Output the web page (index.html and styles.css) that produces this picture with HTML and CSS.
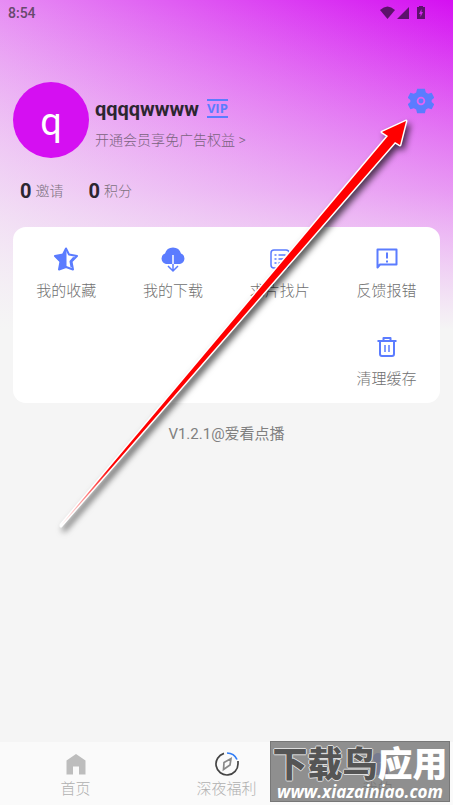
FILE: index.html
```html
<!DOCTYPE html>
<html lang="zh-CN">
<head>
<meta charset="utf-8">
<meta name="viewport" content="width=device-width, initial-scale=1">
<title>我的</title>
<link rel="stylesheet" href="styles.css">
</head>
<body>
<div class="app">
  <header class="status">
    <span>8:54</span>
    <svg class="status-icons" viewBox="0 0 46 16" aria-hidden="true">
      <path d="M0 5Q7.500-2 15 5L7.500 14Z"/>
      <path d="M29 2v12H17Z"/>
      <path fill-rule="evenodd" d="M39 1h4v1h2v12h-8V2h2ZM41.500 4 39 9h1.500v3L43 7h-1.500Z"/>
    </svg>
  </header>

  <main class="content">
    <section class="profile">
      <div class="avatar">q</div>
      <div class="identity">
        <div class="name-row">
          <h1 class="name">qqqqwwww</h1>
          <span class="vip">VIP</span>
        </div>
        <a class="promo" href="#vip">开通会员享免广告权益 &gt;</a>
      </div>
      <button class="settings" type="button" aria-label="设置">
        <svg viewBox="2 2 20 20" aria-hidden="true"><path fill-rule="evenodd" d="M9 2.500h6l.7 3 1.800 1 2.700-.9 2 4-2 1.700v1.400l2 1.700-2 4-2.700-.9-1.800 1-.7 3H9l-.7-3-1.800-1-2.700.9-2-4 2-1.700v-1.400l-2-1.700 2-4 2.700.9 1.800-1ZM12 8.700a3.300 3.300 0 1 0 0 6.600 3.300 3.300 0 0 0 0-6.600Z"/><circle cx="12" cy="12" r="1.900"/></svg>
      </button>
    </section>

    <section class="stats">
      <span class="stat"><b>0</b>邀请</span>
      <span class="stat"><b>0</b>积分</span>
    </section>

    <nav class="card">
      <a class="tile" href="#favorites">
        <svg viewBox="0 0 26 26" aria-hidden="true"><path class="line" d="M13 2.500 16 8.500 24 10 18.500 15.500 20 23.500 13 21 6 23.500 7.500 15.500 2 10 10 8.500Z"/><path d="M13.500 2 9 9 1.500 10 7 16 6 24 13.500 21Z"/><path class="line" d="M21 11.500 17.500 15.500 18.500 21"/></svg>
        <span>我的收藏</span>
      </a>
      <a class="tile" href="#downloads">
        <svg viewBox="0 0 26 26" aria-hidden="true"><path d="M6 18A5.500 5.500 0 0 1 5 7.500a8.300 8.300 0 0 1 16 0A5.500 5.500 0 0 1 20 18Z"/><path class="cut" d="M13 9v9"/><path class="line-thin" d="M13 18v6.500M8 20l5 5 5-5"/></svg>
        <span>我的下载</span>
      </a>
      <a class="tile" href="#requests">
        <svg viewBox="0 0 26 26" aria-hidden="true"><rect class="line-thin" x="4" y="4" width="18" height="18" rx="3"/><path class="line-thin" d="M7.500 9h2M11.500 9h7M7.500 13h2M11.500 13h7M7.500 17h2M11.500 17h7"/></svg>
        <span>求片找片</span>
      </a>
      <a class="tile" href="#feedback">
        <svg viewBox="0 0 26 26" aria-hidden="true"><path class="line" d="M3.500 21.500V3.500h19v15H6Z"/><path class="line" d="M13 6.500v6M13 14.500v2"/></svg>
        <span>反馈报错</span>
      </a>
      <a class="tile tile-last" href="#cache">
        <svg viewBox="0 0 26 26" aria-hidden="true"><path class="line" d="M3.500 7h19M9.500 6V4h7v2M6 7v13q0 2 2 2h10q2 0 2-2V7"/><path class="line-thin" d="M11 11v7M15 11v7"/></svg>
        <span>清理缓存</span>
      </a>
    </nav>
    <p class="version">V1.2.1@爱看点播</p>
  </main>

  <nav class="tabs">
    <a class="tab" href="#home">
      <svg viewBox="0 0 26 26" aria-hidden="true"><path d="M13 3 22.500 9.500v14H16v-8h-6v8H3.500v-14Z"/></svg>
      <span>首页</span>
    </a>
    <a class="tab" href="#night">
      <svg viewBox="0 0 26 26" aria-hidden="true"><path class="ring" d="M10 2.400A11 11 0 1 0 24 13V10"/><path class="ring-accent" d="M13 2a11 11 0 0 1 10 6.500"/><path class="needle" d="M17 7.500 16 14 9.500 18.500 10 11.500Z"/></svg>
      <span>深夜福利</span>
    </a>
    <a class="tab tab-active" href="#mine">
      <svg viewBox="0 0 26 26" aria-hidden="true"><circle cx="13" cy="7" r="5"/><path d="M3 24q0-12 10-12t10 12Z"/></svg>
      <span>我的</span>
    </a>
  </nav>

  <svg class="pointer" viewBox="0 0 360 420" aria-hidden="true">
    <defs><linearGradient id="shaft" gradientUnits="userSpaceOnUse" x1="10" y1="414" x2="60" y2="355"><stop offset="0" stop-color="#fff"/><stop offset="1" stop-color="#f00"/></linearGradient></defs>
    <path d="M10 414 337 25 331 21 355 10 349 34 344 31 10 415Z" fill="url(#shaft)"/>
  </svg>

  <aside class="watermark">
    <strong><span>下载鸟</span>应用</strong>
    <em>www.xiazainiao.com</em>
  </aside>
</div>
</body>
</html>
```
FILE: styles.css
```css
* { box-sizing: border-box; }
body {
  margin: 0;
  font-family: Roboto, "Noto Sans CJK SC", sans-serif;
  font-size: 15px;
  font-weight: 300;
  color: #707070;
  background: #f5f5f5;
}
a { color: inherit; text-decoration: none; }
.app {
  position: relative;
  min-height: 100vh;
  display: flex;
  flex-direction: column;
  background:
    linear-gradient(to bottom, #f5f5f500, #f5f5f580 190px, #f5f5f5 330px),
    linear-gradient(230deg, #d50ff2, #f5f5f5 640px);
}
.status {
  display: flex;
  justify-content: space-between;
  align-items: center;
  height: 26px;
  padding: 0 27px 0 8px;
  font-size: 14px;
  font-weight: 500;
  color: #67496d;
}
.status-icons { width: 46px; height: 16px; fill: #5c126b; }
.content { flex: 1; padding: 56px 13px 0; }
.profile { display: flex; align-items: center; }
.avatar {
  width: 76px;
  height: 76px;
  border-radius: 50%;
  background: #d50ff2;
  color: #fff;
  font-size: 38px;
  font-weight: 400;
  line-height: 80px;
  text-align: center;
}
.identity { flex: 1; padding: 5px 0 0 6px; }
.name-row { display: flex; align-items: center; gap: 8px; }
.name { margin: 0; font-size: 20px; line-height: 26px; color: #2c2630; }
.vip {
  border: solid #5b7cff;
  border-width: 2px 0;
  color: #5b7cff;
  font: 700 13px/15px "Open Sans", sans-serif;
}
.promo { display: block; margin-top: 8px; font-size: 14px; line-height: 20px; color: #7a6380; }
.settings {
  align-self: flex-start;
  width: 26px;
  height: 26px;
  margin: 6px 6px 0 0;
  padding: 0;
  border: 0;
  background: none;
}
.settings svg { display: block; width: 26px; height: 26px; fill: #5b7cff; }
.stats { display: flex; gap: 25px; padding: 20px 7px 0; }
.stat { display: flex; align-items: center; gap: 4px; font-size: 14px; line-height: 26px; color: #7d7280; }
.stat b { font-size: 20px; font-weight: 700; color: #2c2630; }
.card {
  display: grid;
  grid-template-columns: repeat(4, 1fr);
  margin-top: 23px;
  border-radius: 13px;
  background: #fff;
}
.tile {
  display: flex;
  flex-direction: column;
  align-items: center;
  gap: 8px;
  height: 88px;
  padding-top: 19px;
  line-height: 22px;
}
.tile-last { grid-column: 4; }
.tile svg, .tab svg { width: 26px; height: 26px; fill: #5b7cff; }
.tile .line, .tile .line-thin { fill: none; stroke: #5b7cff; stroke-width: 2; stroke-linejoin: round; }
.tile .line-thin { stroke-width: 1.5; }
.tile .cut { stroke: #fff; stroke-width: 1.5; }
.version { margin: 19px 0 0; font-weight: 400; line-height: 24px; text-align: center; color: #808080; }
.tabs {
  display: grid;
  grid-template-columns: repeat(3, 1fr);
  height: 63px;
  background: #fafafa;
}
.tab {
  display: flex;
  flex-direction: column;
  align-items: center;
  padding-top: 9px;
  line-height: 24px;
  color: #b0b0b0;
}
.tab svg { fill: #bdbdbd; }
.tab .ring, .tab .ring-accent, .tab .needle { fill: none; stroke: #444; stroke-width: 1.7; }
.tab .ring-accent { stroke: #2f7cf6; }
.tab .needle { stroke: #888; }
.tab-active { color: #333; }
.tab-active svg { fill: #3b5cff; }
.pointer {
  position: absolute;
  left: 51px;
  top: 111px;
  width: 360px;
  height: 420px;
  overflow: visible;
  pointer-events: none;
  filter: drop-shadow(3px 4px 3px #000a);
}
.pointer path { stroke: #fff; stroke-width: 3; stroke-linejoin: round; paint-order: stroke; }
.watermark {
  position: absolute;
  right: 3px;
  bottom: 3px;
  width: 180px;
  height: 61px;
  padding-top: 7px;
  background: #808080e0;
  border: 1px solid #777;
  color: #fff;
  text-align: center;
  white-space: nowrap;
}
.watermark strong { display: block; font-size: 35px; font-weight: 900; line-height: 34px; }
.watermark strong span { color: #555; text-shadow: 1px 0 #ddd, -1px 0 #ddd, 0 1px #ddd, 0 -1px #ddd; }
.watermark em { display: block; font: italic 700 17px/17px "Open Sans", sans-serif; }
```
